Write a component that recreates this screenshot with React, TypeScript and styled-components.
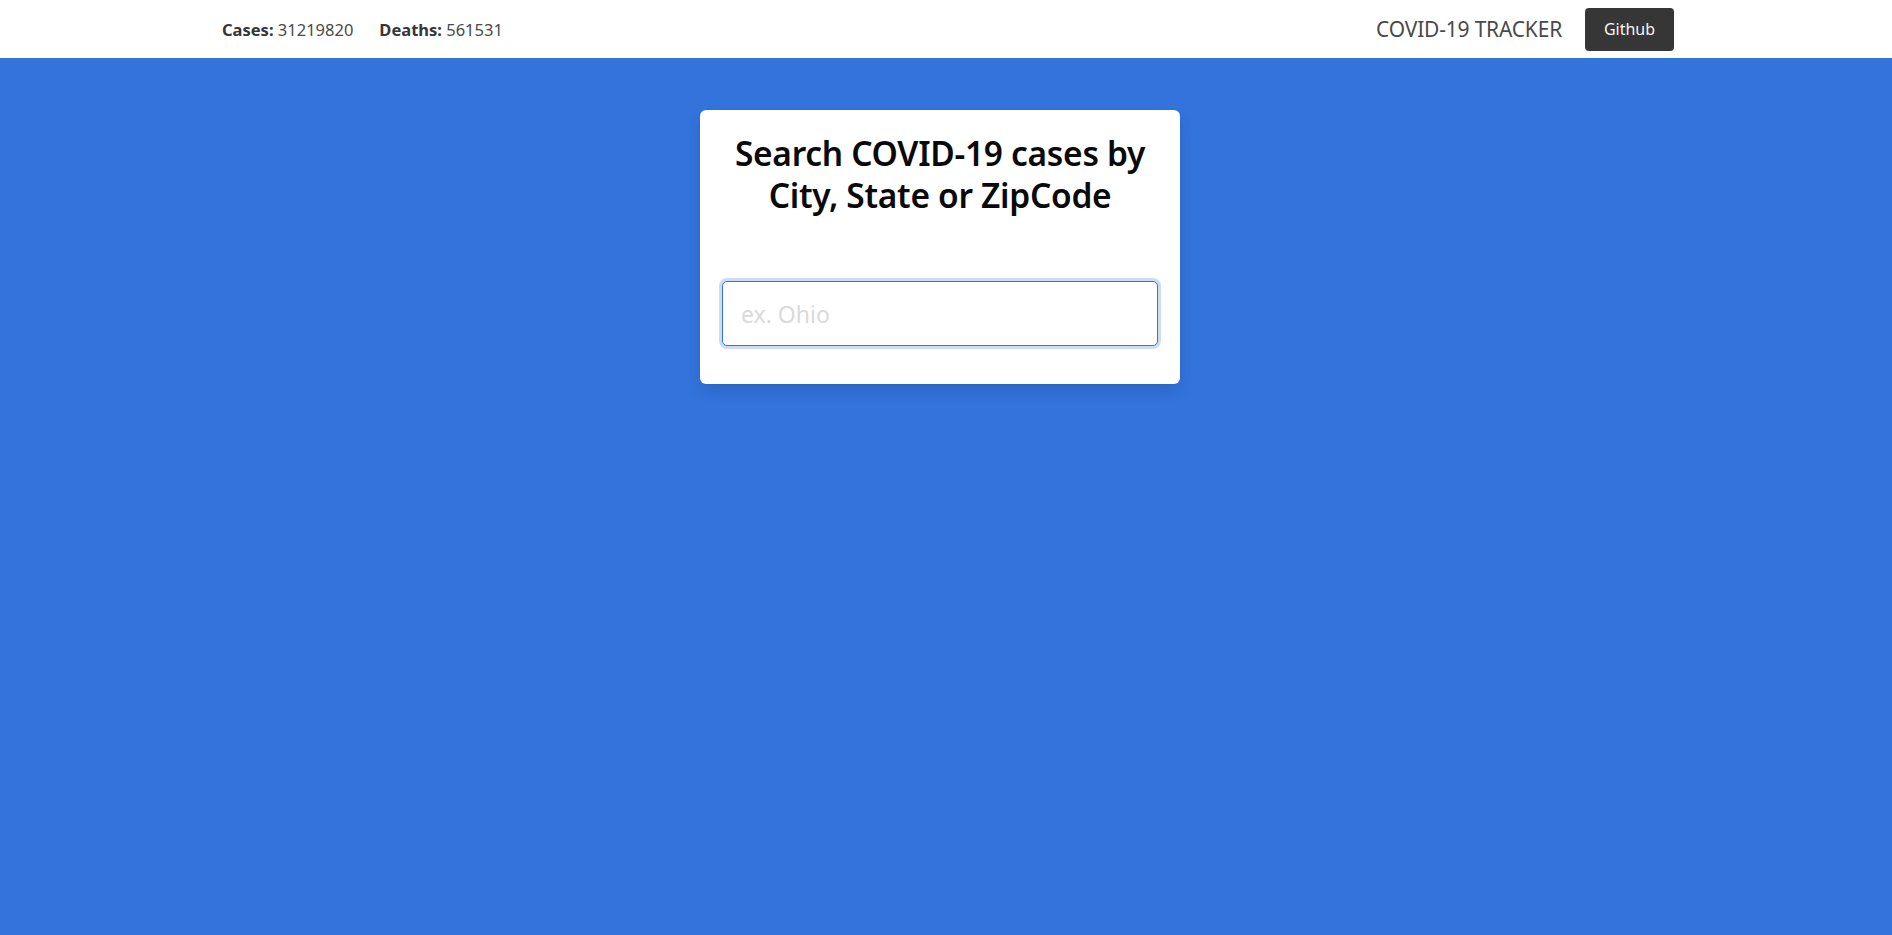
import React from "react";
import styled, { createGlobalStyle } from "styled-components";

const GlobalStyle = createGlobalStyle`
  html, body {
    margin: 0;
    padding: 0;
    height: 100%;
    background: #3273dc;
    font-family: "Noto Sans", "Open Sans", "Liberation Sans", sans-serif;
  }
  #root { min-height: 100%; }
  * { box-sizing: border-box; }
`;

const Page = styled.div`
  min-height: 935px;
  background: #3273dc;
  display: flex;
  flex-direction: column;
`;

const NavBar = styled.nav`
  height: 58px;
  background: #ffffff;
  display: flex;
  justify-content: center;
`;

const NavInner = styled.div`
  width: 100%;
  max-width: 1460px;
  padding: 0 2px 0 6px;
  display: flex;
  align-items: center;
  justify-content: space-between;
`;

const NavGroup = styled.div<{ $gap: number }>`
  display: flex;
  align-items: center;
  gap: ${(p) => p.$gap}px;
`;

const Stat = styled.span`
  font-size: 16.5px;
  color: #4a4a4a;
  b {
    font-weight: 700;
    color: #363636;
  }
`;

const Brand = styled.span`
  font-size: 21px;
  font-weight: 400;
  color: #4a4a4a;
  letter-spacing: -0.2px;
`;

const GithubButton = styled.a`
  display: inline-flex;
  align-items: center;
  justify-content: center;
  width: 89px;
  height: 43px;
  border-radius: 4px;
  background: #363636;
  color: #f5f5f5;
  font-size: 16px;
  text-decoration: none;
  cursor: pointer;
`;

const Main = styled.main`
  display: flex;
  justify-content: center;
  padding: 52px 12px 0 0;
`;

const Card = styled.div`
  width: 480px;
  background: #ffffff;
  border-radius: 6px;
  padding: 22px 22px 38px;
  box-shadow: 0 0.5em 1em -0.125em rgba(10, 10, 10, 0.12), 0 0 0 1px rgba(10, 10, 10, 0.02);
  display: flex;
  flex-direction: column;
`;

const Title = styled.h1`
  margin: 0 0 65px;
  text-align: center;
  font-size: 33.5px;
  line-height: 42px;
  font-weight: 600;
  color: #0a0a0a;
  letter-spacing: -0.3px;
`;

const SearchInput = styled.input`
  width: 100%;
  height: 65px;
  border: 1px solid #3273dc;
  border-radius: 5px;
  box-shadow: 0 0 0 3px rgba(50, 115, 220, 0.25);
  padding: 0 18px;
  font-family: inherit;
  font-size: 23px;
  color: #363636;
  outline: none;
  &::placeholder {
    color: #dadada;
  }
`;

export default function App() {
  return (
    <>
      <GlobalStyle />
      <Page>
        <NavBar>
          <NavInner>
            <NavGroup $gap={26}>
              <Stat>
                <b>Cases:</b> 31219820
              </Stat>
              <Stat>
                <b>Deaths:</b> 561531
              </Stat>
            </NavGroup>
            <NavGroup $gap={23}>
              <Brand>COVID-19 TRACKER</Brand>
              <GithubButton>Github</GithubButton>
            </NavGroup>
          </NavInner>
        </NavBar>
        <Main>
          <Card>
            <Title>
              Search COVID-19 cases by
              <br />
              City, State or ZipCode
            </Title>
            <SearchInput placeholder="ex. Ohio" autoFocus />
          </Card>
        </Main>
      </Page>
    </>
  );
}
